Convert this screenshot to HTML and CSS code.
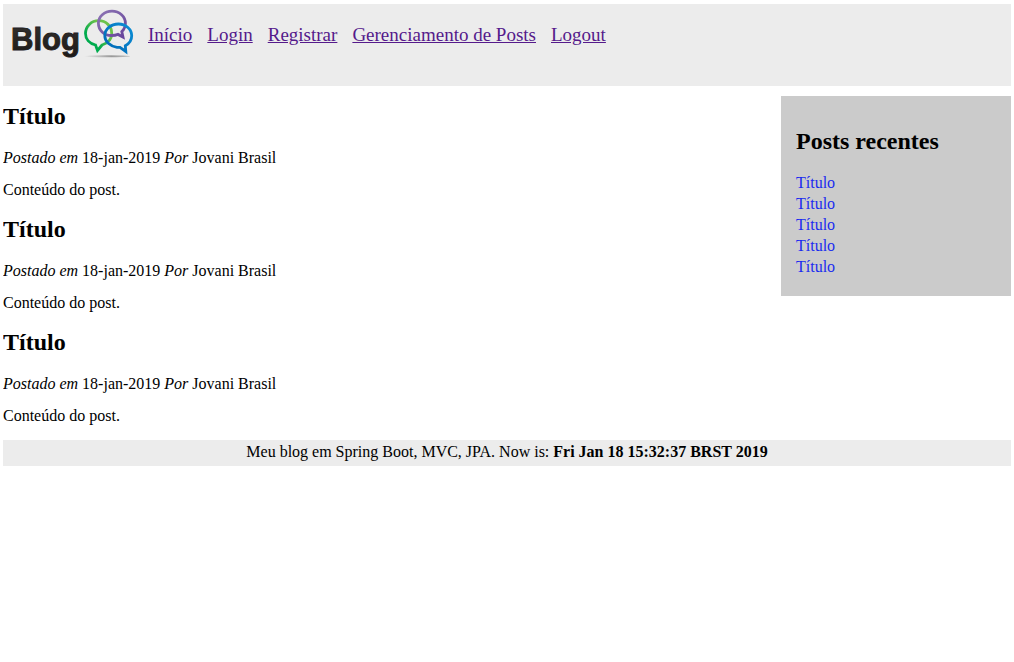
FILE: index.html
```html
<!DOCTYPE html>
<html lang="pt-BR">
<head>
<meta charset="utf-8">
<title>Blog</title>
<link rel="stylesheet" href="styles.css">
</head>
<body>
<header class="header">
  <svg class="logo" viewBox="11 8 124 52" width="124" height="52" role="img" aria-label="Blog">
    <defs>
      <linearGradient id="ink" x1="0" y1="0" x2="0" y2="1"><stop offset="0" stop-color="#34312f"/><stop offset="1" stop-color="#1c1917"/></linearGradient>
      <linearGradient id="green" x1="0" y1="1" x2="1" y2="0"><stop offset="0.3" stop-color="#00ab4e"/><stop offset="0.7" stop-color="#6cc24a"/></linearGradient>
      <linearGradient id="purple" x1="0" y1="0" x2="1" y2="1"><stop offset="0" stop-color="#8d75b4"/><stop offset="1" stop-color="#65439a"/></linearGradient>
      <linearGradient id="blue" x1="0" y1="1" x2="1" y2="0"><stop offset="0" stop-color="#0066b3"/><stop offset="1" stop-color="#0c8fd6"/></linearGradient>
      <linearGradient id="shadow"><stop offset="0" stop-color="#999" stop-opacity="0"/><stop offset="0.6" stop-color="#999"/><stop offset="1" stop-color="#999" stop-opacity="0.5"/></linearGradient>
    </defs>
    <text class="logo-text" x="11" y="50" fill="url(#ink)" stroke="#24211f">Blog</text>
    <ellipse cx="107" cy="56.300" rx="23" ry="1" fill="url(#shadow)"/>
    <g fill="none" stroke-width="2.800" stroke-linejoin="miter">
      <path stroke="url(#green)" d="M95.500 45C89.500 43.500 85.500 39.200 85.500 33.500C85.500 26.300 91.300 20.700 98.700 20.700C106 20.700 111.700 26.300 111.700 33.300C111.700 39 107.700 43.300 102 45L97.500 50.500Z"/>
      <path stroke="url(#purple)" d="M111.500 35.500C104 35.500 98.400 30 98.400 23.200C98.400 16.500 104.300 11.200 112 11.200C119.600 11.200 125.400 16.500 125.400 23.200C125.400 26.700 124 29.500 121.800 31.600L123 37L118 34.400C116 35.200 114 35.500 111.500 35.500Z"/>
      <path stroke="url(#blue)" d="M117 47.300C110 46.300 104.800 41.500 104.800 35.700C104.800 29 111 24 118.400 24C126 24 131.700 29.300 131.700 35.700C131.700 39.800 129.200 43.600 125.300 45.700L125.800 51.500L120 47.300Z"/>
    </g>
  </svg>
  <nav class="nav">
    <a href="#">Início</a>
    <a href="#">Login</a>
    <a href="#">Registrar</a>
    <a href="#">Gerenciamento de Posts</a>
    <a href="#">Logout</a>
  </nav>
</header>
<div class="content">
  <main class="posts">
    <article class="post">
      <h2>Título</h2>
      <p class="meta"><i>Postado em</i> 18-jan-2019 <i>Por</i> Jovani Brasil</p>
      <p>Conteúdo do post.</p>
    </article>
    <article class="post">
      <h2>Título</h2>
      <p class="meta"><i>Postado em</i> 18-jan-2019 <i>Por</i> Jovani Brasil</p>
      <p>Conteúdo do post.</p>
    </article>
    <article class="post">
      <h2>Título</h2>
      <p class="meta"><i>Postado em</i> 18-jan-2019 <i>Por</i> Jovani Brasil</p>
      <p>Conteúdo do post.</p>
    </article>
  </main>
  <aside class="sidebar">
    <h2>Posts recentes</h2>
    <ul class="recent">
      <li><a href="#">Título</a></li>
      <li><a href="#">Título</a></li>
      <li><a href="#">Título</a></li>
      <li><a href="#">Título</a></li>
      <li><a href="#">Título</a></li>
    </ul>
  </aside>
</div>
<footer class="footer">Meu blog em Spring Boot, MVC, JPA. Now is: <b>Fri Jan 18 15:32:37 BRST 2019</b></footer>
</body>
</html>
```
FILE: styles.css
```css
body {
  margin: 4px 3px;
  background: #fff;
  color: #000;
  font: 16px/18px "Liberation Serif", "Times New Roman", serif;
}
h2 {
  margin: 0;
  font-size: 24px;
  line-height: 28px;
}
p { margin: 0; }
.header {
  display: flex;
  align-items: flex-start;
  gap: 13px;
  padding: 4px 8px 26px;
  background: #ececec;
}
.logo { flex: none; }
.logo-text {
  font: 700 31px "Liberation Sans", Arial, sans-serif;
  stroke-width: 1px;
}
.nav {
  display: flex;
  flex-wrap: wrap;
  gap: 15px;
  padding-top: 16px;
  font-size: 19px;
  line-height: 22px;
}
.nav a { color: #551a8b; }
.content {
  display: flex;
  align-items: flex-start;
  gap: 15px;
  margin-top: 10px;
}
.posts {
  flex: 1;
  display: grid;
  gap: 16px;
  padding: 6px 0 15px;
}
.post {
  display: grid;
  gap: 14px;
}
.post h2 { margin-bottom: 5px; }
.sidebar {
  box-sizing: border-box;
  width: 230px;
  padding: 31px 15px 19px;
  background: #cbcbcb;
}
.recent {
  margin: 17px 0 0;
  padding: 0;
  list-style: none;
  line-height: 21px;
}
.recent a {
  color: #1a2cf0;
  text-decoration: none;
}
.footer {
  padding: 3px 10px 5px;
  background: #ececec;
  text-align: center;
}
```
